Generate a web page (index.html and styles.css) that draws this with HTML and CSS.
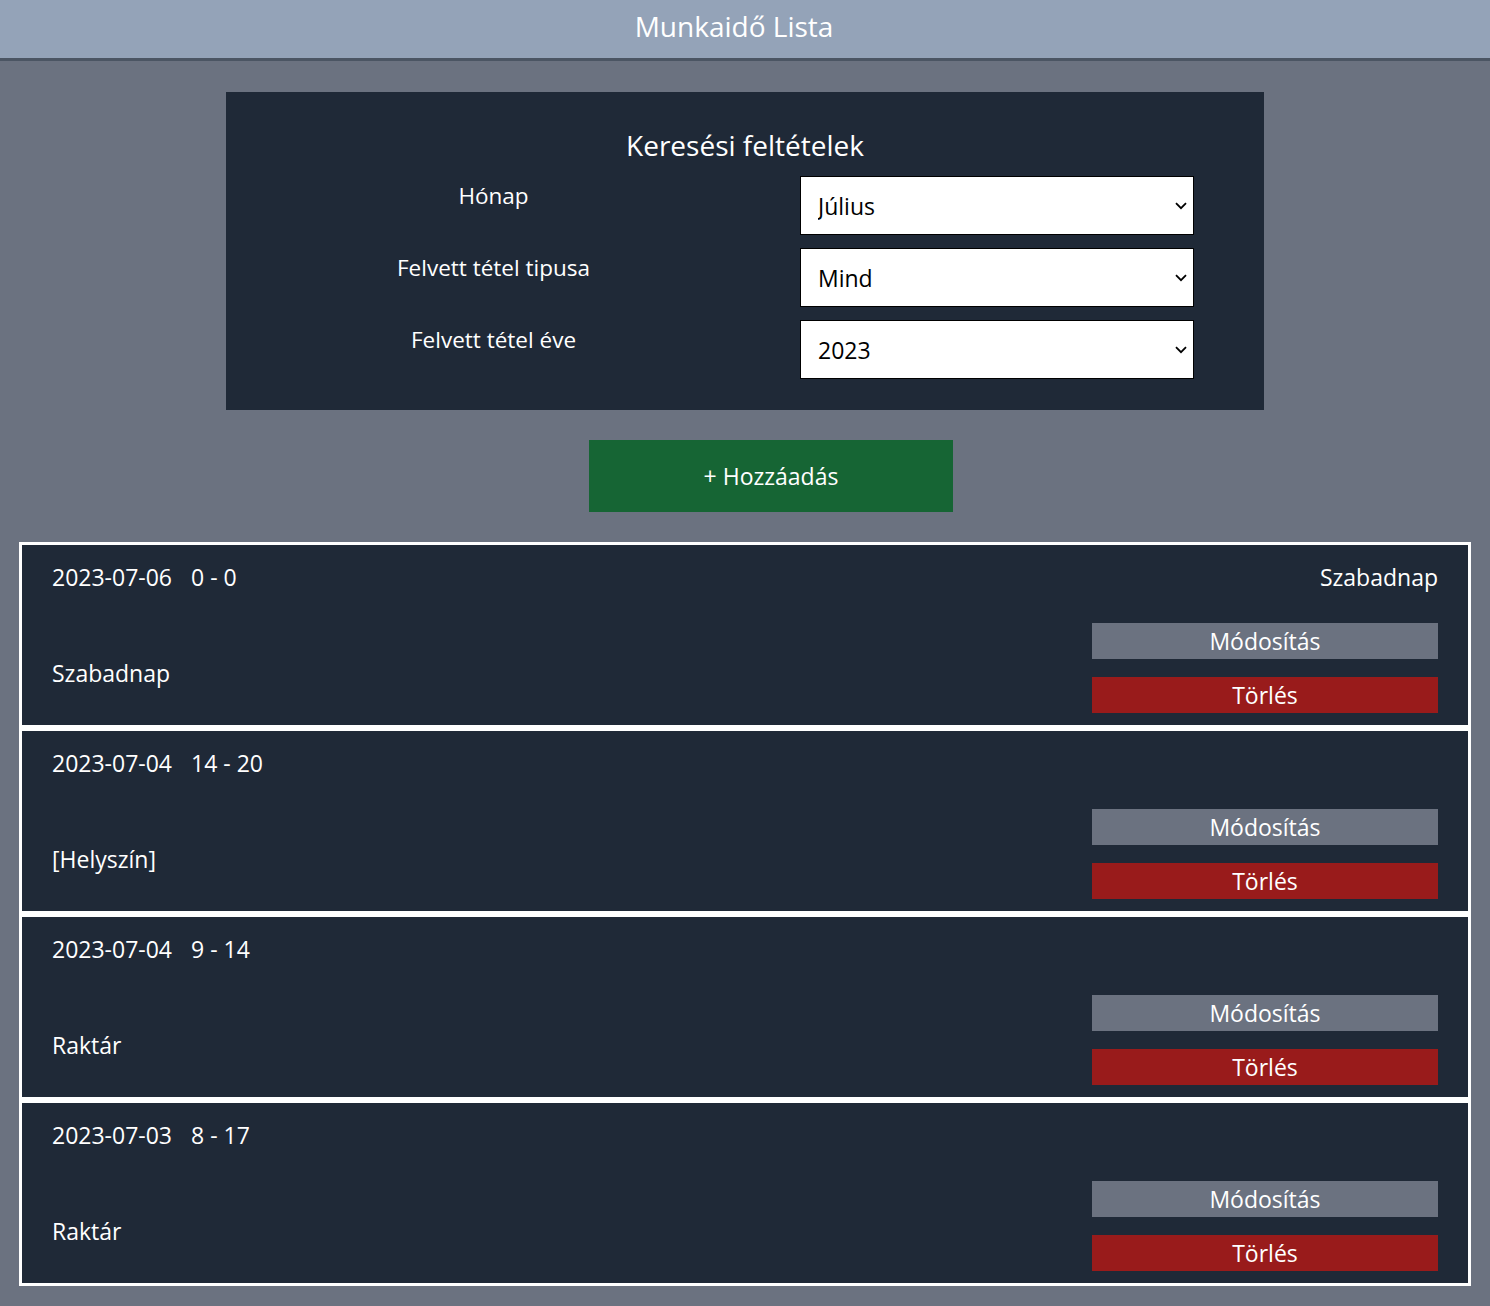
FILE: index.html
```html
<!DOCTYPE html>
<html lang="hu">
<head>
<meta charset="utf-8">
<title>Munkaidő Lista</title>
<link rel="stylesheet" href="styles.css">
</head>
<body>
<header class="topbar"><h1 class="title">Munkaidő Lista</h1></header>
<main class="page">
  <section class="search">
    <h2 class="search-title">Keresési feltételek</h2>
    <div class="field-grid">
      <label class="field-label" for="month">Hónap</label>
      <div class="select-wrap">
        <select class="field-select" id="month"><option>Július</option></select>
        <svg class="chevron" viewBox="0 0 12 8" width="12" height="8"><path d="M1 1.2 L6 6.2 L11 1.2" fill="none" stroke="#000" stroke-width="1.8"/></svg>
      </div>
      <label class="field-label" for="kind">Felvett tétel tipusa</label>
      <div class="select-wrap">
        <select class="field-select" id="kind"><option>Mind</option></select>
        <svg class="chevron" viewBox="0 0 12 8" width="12" height="8"><path d="M1 1.2 L6 6.2 L11 1.2" fill="none" stroke="#000" stroke-width="1.8"/></svg>
      </div>
      <label class="field-label" for="year">Felvett tétel éve</label>
      <div class="select-wrap">
        <select class="field-select" id="year"><option>2023</option></select>
        <svg class="chevron" viewBox="0 0 12 8" width="12" height="8"><path d="M1 1.2 L6 6.2 L11 1.2" fill="none" stroke="#000" stroke-width="1.8"/></svg>
      </div>
    </div>
  </section>
  <div class="add-row"><button class="add-btn">+ Hozzáadás</button></div>
  <ul class="entries">
    <li class="entry">
      <div class="entry-top"><div class="when"><span>2023-07-06</span><span class="time">0 - 0</span></div><span class="type">Szabadnap</span></div>
      <div class="entry-bottom"><span class="place">Szabadnap</span><div class="actions"><button class="btn btn-edit">Módosítás</button><button class="btn btn-del">Törlés</button></div></div>
    </li>
    <li class="entry">
      <div class="entry-top"><div class="when"><span>2023-07-04</span><span class="time">14 - 20</span></div><span class="type"></span></div>
      <div class="entry-bottom"><span class="place">[Helyszín]</span><div class="actions"><button class="btn btn-edit">Módosítás</button><button class="btn btn-del">Törlés</button></div></div>
    </li>
    <li class="entry">
      <div class="entry-top"><div class="when"><span>2023-07-04</span><span class="time">9 - 14</span></div><span class="type"></span></div>
      <div class="entry-bottom"><span class="place">Raktár</span><div class="actions"><button class="btn btn-edit">Módosítás</button><button class="btn btn-del">Törlés</button></div></div>
    </li>
    <li class="entry">
      <div class="entry-top"><div class="when"><span>2023-07-03</span><span class="time">8 - 17</span></div><span class="type"></span></div>
      <div class="entry-bottom"><span class="place">Raktár</span><div class="actions"><button class="btn btn-edit">Módosítás</button><button class="btn btn-del">Törlés</button></div></div>
    </li>
  </ul>
</main>
</body>
</html>
```

FILE: styles.css
```css
* { box-sizing: border-box; }
html, body { margin: 0; padding: 0; }
body {
  background: #6b7280;
  font-family: "Open Sans", "Noto Sans", sans-serif;
  color: #ffffff;
}
.topbar {
  height: 61px;
  background: #94a3b8;
  border-bottom: 3px solid #4b5563;
  display: flex;
  align-items: center;
  justify-content: center;
  padding-right: 22px;
}
.title {
  margin: 0;
  font-size: 28px;
  font-weight: 400;
  line-height: 40px;
  margin-top: -7px;
}
.page {
  padding: 31px 19px 20px;
}
.search {
  width: 1038px;
  margin: 0 auto;
  background: #1f2937;
  padding: 33px 71px 31px;
}
.search-title {
  margin: 0 0 11px;
  text-align: center;
  font-size: 28px;
  font-weight: 400;
  line-height: 40px;
}
.field-grid {
  display: grid;
  grid-template-columns: 393px 394px;
  column-gap: 110px;
  row-gap: 13px;
}
.field-label {
  text-align: center;
  font-size: 22.5px;
  line-height: 28px;
  padding-top: 6px;
}
.select-wrap {
  position: relative;
  height: 59px;
}
.field-select {
  -webkit-appearance: none;
  appearance: none;
  display: block;
  height: 59px;
  width: 394px;
  border: 1px solid #000;
  border-radius: 0;
  background: #fff;
  color: #000;
  font-family: inherit;
  font-size: 23px;
  padding: 0 30px 0 17px;
}
.chevron {
  position: absolute;
  right: 7px;
  top: 26px;
  pointer-events: none;
}
.add-row {
  display: flex;
  justify-content: center;
  padding-left: 52px;
  margin: 30px 0;
}
.add-btn {
  width: 364px;
  height: 72px;
  border: 0;
  background: #166534;
  color: #fff;
  font-family: inherit;
  font-size: 23px;
  padding: 0;
}
.entries {
  list-style: none;
  margin: 0;
  padding: 0;
}
.entry {
  border: 3px solid #fff;
  background: #1f2937;
  padding: 16px 30px 12px;
  font-size: 23px;
}
.entry-top {
  display: flex;
  justify-content: space-between;
  line-height: 32px;
  height: 32px;
}
.when {
  display: flex;
  gap: 19px;
}
.entry-bottom {
  margin-top: 30px;
  display: flex;
  justify-content: space-between;
  align-items: center;
}
.place {
  line-height: 32px;
  padding-top: 10px;
}
.actions {
  display: flex;
  flex-direction: column;
  gap: 18px;
  width: 346px;
}
.btn {
  height: 36px;
  border: 0;
  color: #fff;
  font-family: inherit;
  font-size: 23px;
  line-height: 36px;
  padding: 0;
}
.btn-edit { background: #6b7280; }
.btn-del { background: #991b1b; }
```
